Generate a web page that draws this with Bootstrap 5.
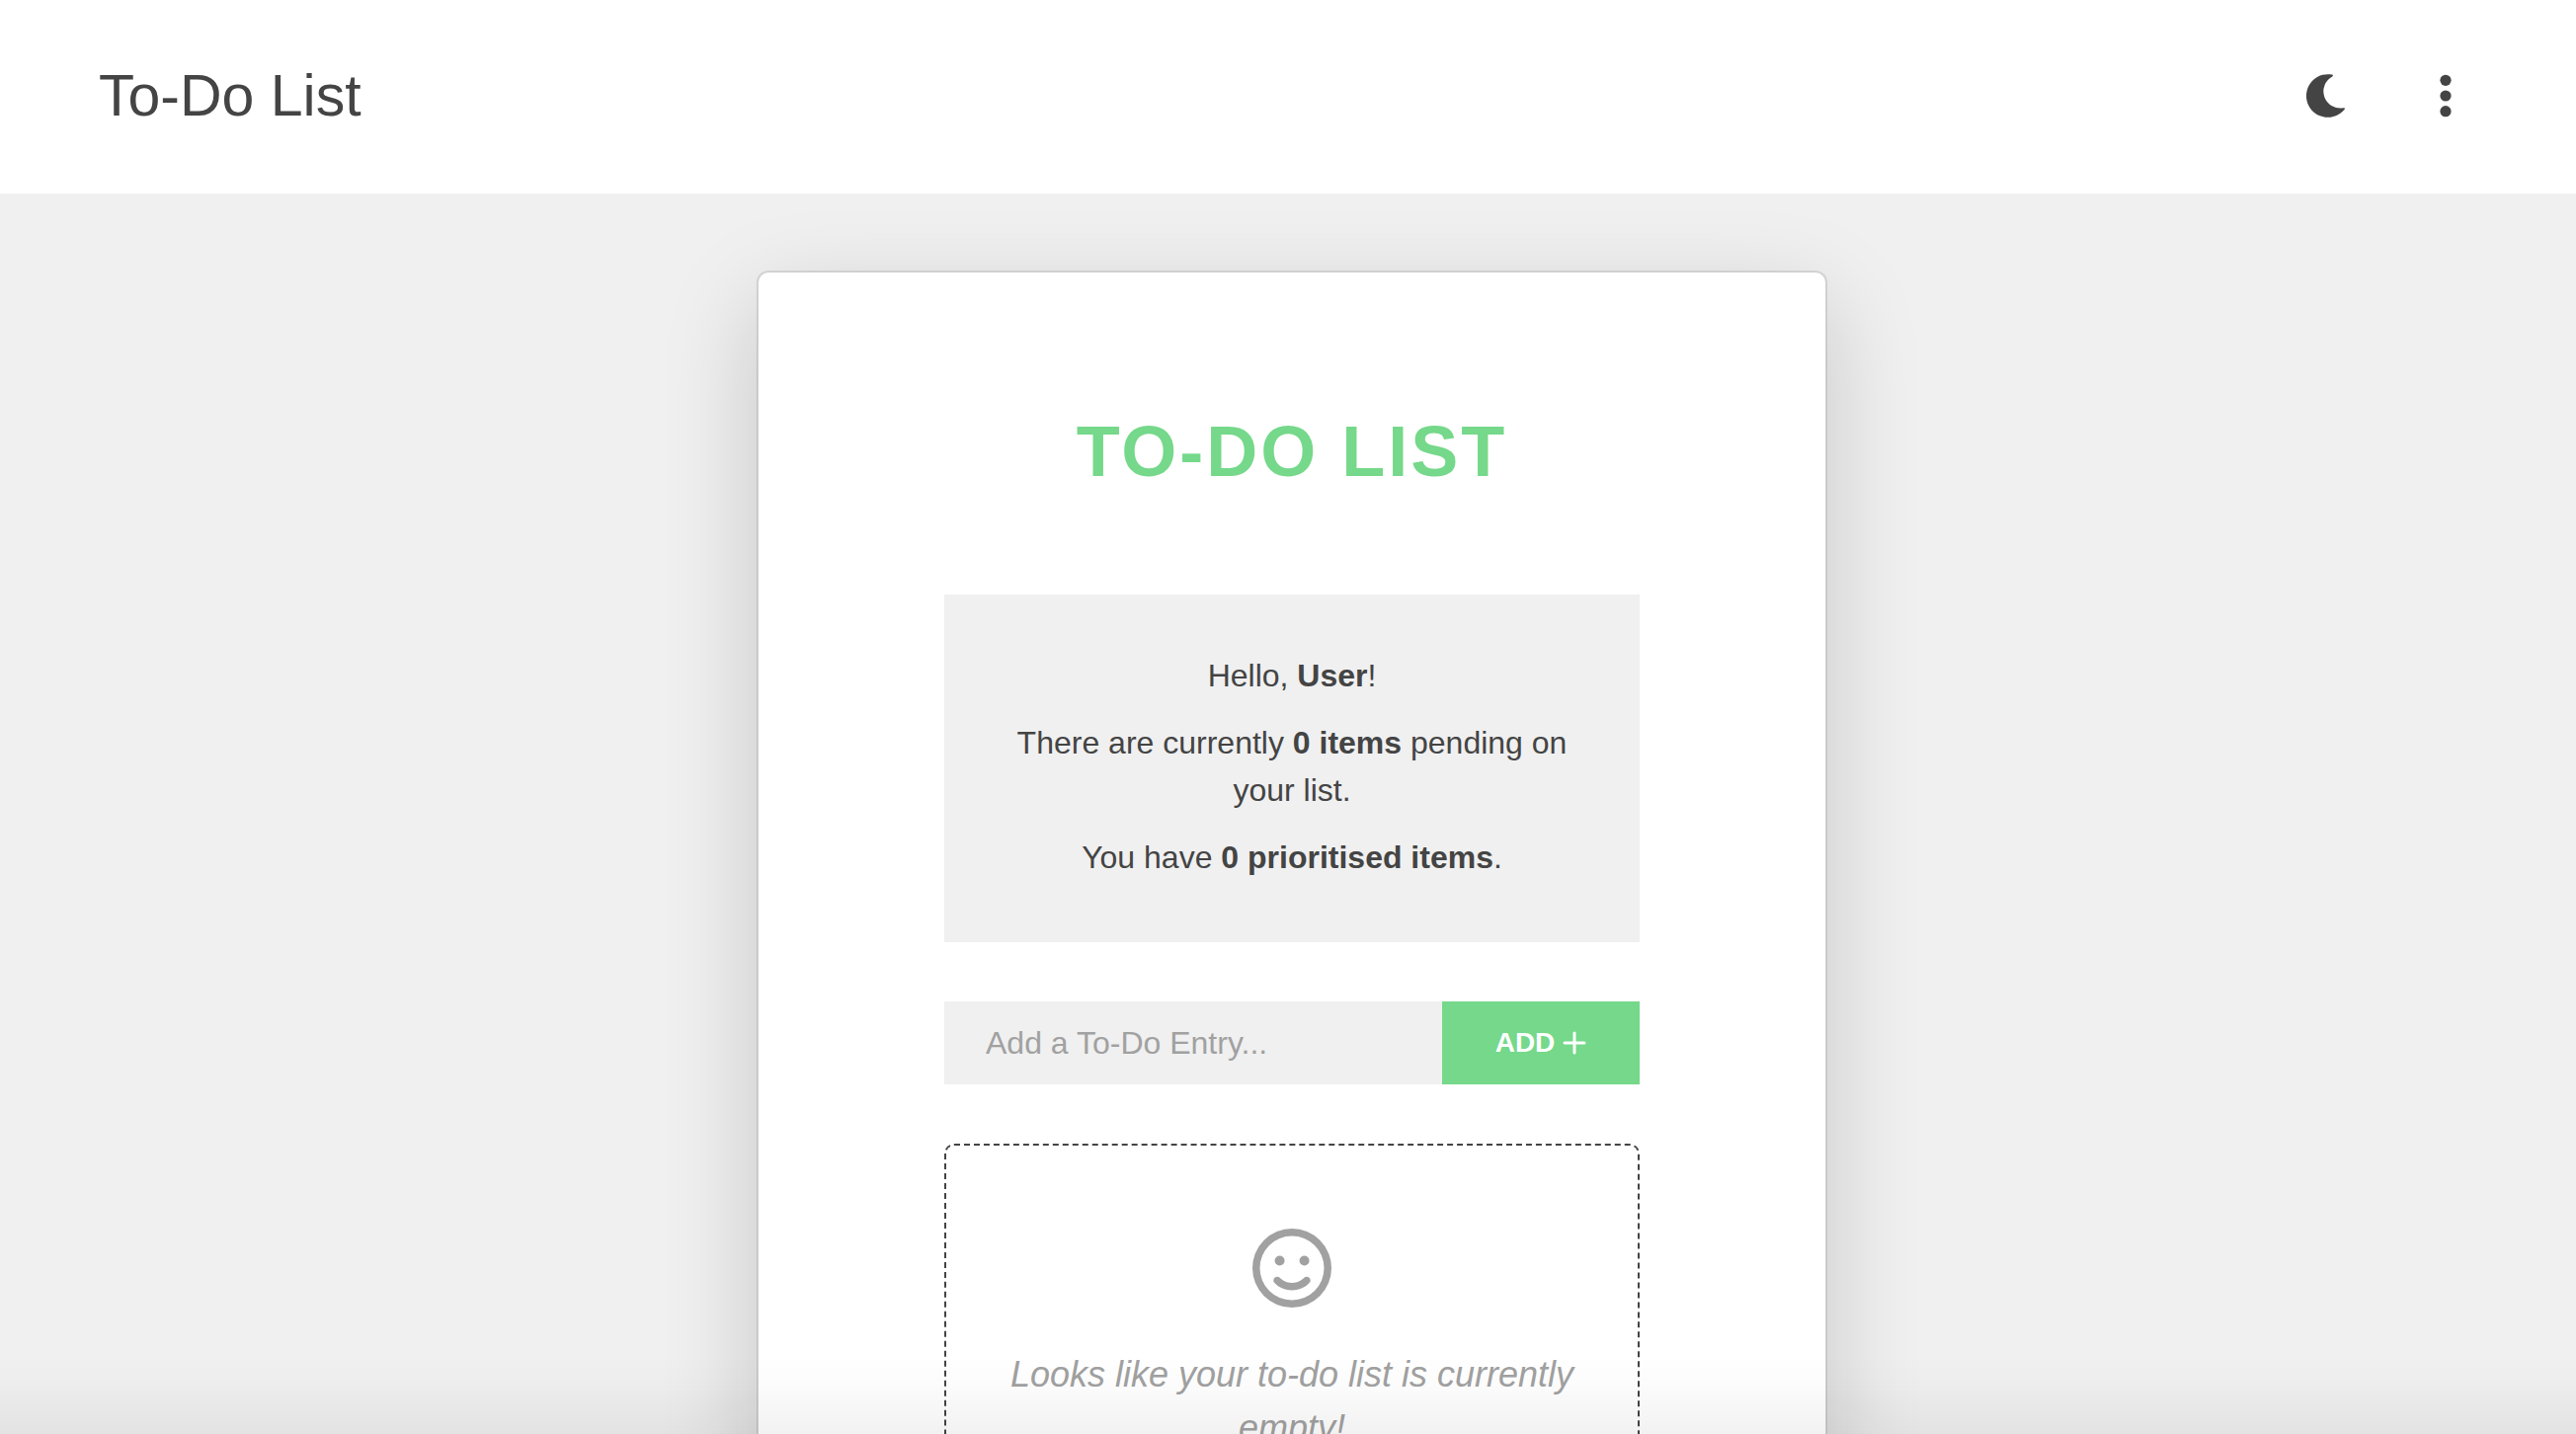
<!DOCTYPE html>
<html lang="en">
<head>
<meta charset="utf-8">
<meta name="viewport" content="width=device-width, initial-scale=1">
<title>To-Do List</title>
<link href="https://cdn.jsdelivr.net/npm/bootstrap@5.3.0/dist/css/bootstrap.min.css" rel="stylesheet">
<style>
  :root { --ink: #444; --page: #f0f0f0; --accent: #75d88a; --muted: #a1a1a1; }
  body { background: var(--page); color: var(--ink); font-family: "Liberation Sans", Arial, sans-serif; font-size: 32px; line-height: 48px; overflow-x: hidden; }
  .topbar { min-height: 196px; padding: 0 100px 2px; }
  .topbar .navbar-brand { color: var(--ink); font-size: 59px; line-height: 72px; }
  .topbar-actions { gap: 58px; }
  .icon-btn { width: 64px; height: 64px; color: var(--ink); border: 0; }
  .page-body { padding: 78px 0 80px 8px; }
  .todo-card { width: 1084px; max-width: 100%; padding: 136px 188px; border: 2px solid rgba(0, 0, 0, .11); background-clip: padding-box; border-radius: 12px; box-shadow: 0 32px 96px rgba(0, 0, 0, .175); }
  .todo-title { color: var(--accent); font-size: 72px; line-height: 90px; letter-spacing: 3px; margin-bottom: 100px; }
  .summary { background: var(--page); padding: 58px 60px 62px; margin-bottom: 60px; }
  .summary p { margin-bottom: 20px; }
  .summary p:last-child { margin-bottom: 0; }
  .entry { height: 84px; margin-bottom: 60px; }
  .entry .form-control { background: var(--page); border: 0; border-radius: 0; padding: 0 42px; font-size: 32px; color: var(--ink); }
  .entry .form-control::placeholder { color: var(--muted); opacity: 1; }
  .entry .btn { width: 200px; background: var(--accent); color: #fff; border: 0; border-radius: 0; font-size: 28px; }
  .empty-box { border: 2px dashed var(--ink); border-radius: 10px; padding: 84px 40px; color: var(--muted); font-size: 36px; line-height: 54px; }
  .empty-box svg { margin-bottom: 41px; }
  .edge-fade { height: 80px; background: linear-gradient(rgba(0, 0, 0, 0), rgba(0, 0, 0, .012) 35%, rgba(0, 0, 0, .05)); pointer-events: none; }
</style>
</head>
<body>
<nav class="navbar topbar bg-white">
  <a class="navbar-brand p-0 m-0" href="#">To-Do List</a>
  <div class="topbar-actions d-flex align-items-center">
    <button type="button" class="btn icon-btn p-0 d-flex align-items-center justify-content-center" aria-label="Dark mode">
      <svg width="39" height="44" viewBox="0 0 117 131" fill="currentColor" aria-hidden="true"><path d="M66 0A65.500 65.500 0 1 0 116 107C118.500 104.500 116.500 101.500 113 102A51 51 0 0 1 79 7C82 4 81 1 77 .8C73 0 70 0 66 0Z"/></svg>
    </button>
    <button type="button" class="btn icon-btn p-0 d-flex align-items-center justify-content-center" aria-label="Menu">
      <svg width="12" height="44" viewBox="0 0 12 44" fill="currentColor" aria-hidden="true"><circle cx="6" cy="6.300" r="5.600"/><circle cx="6" cy="22" r="5.600"/><circle cx="6" cy="37.700" r="5.600"/></svg>
    </button>
  </div>
</nav>
<main class="page-body d-flex justify-content-center">
  <section class="card todo-card text-center">
    <h1 class="todo-title fw-bold text-uppercase">To-Do List</h1>
    <div class="summary">
      <p>Hello, <strong>User</strong>!</p>
      <p>There are currently <strong>0 items</strong> pending on your list.</p>
      <p>You have <strong>0 prioritised items</strong>.</p>
    </div>
    <form class="entry input-group flex-nowrap">
      <input type="text" class="form-control" placeholder="Add a To-Do Entry..." aria-label="Add a To-Do Entry">
      <button type="button" class="btn fw-bold d-flex align-items-center justify-content-center gap-2">ADD
        <svg width="24" height="24" viewBox="0 0 24 24" fill="none" stroke="currentColor" stroke-width="3" stroke-linecap="round" aria-hidden="true"><path d="M12 2v20M2 12h20"/></svg>
      </button>
    </form>
    <div class="empty-box">
      <svg class="d-block mx-auto" width="80" height="80" viewBox="0 0 512 512" fill="currentColor" aria-hidden="true"><path d="M464 256A208 208 0 1 0 48 256a208 208 0 1 0 416 0zM0 256a256 256 0 1 1 512 0A256 256 0 1 1 0 256zm177.600 62.700C192.600 334.500 218.800 352 256 352s63.400-17.500 78.400-33.300c9.200-9.600 24.400-9.900 33.900-.7s9.900 24.400 .7 33.900c-22 23-60 48.100-113 48.100s-91-25.100-113-48.100c-9.200-9.600-8.900-24.800 .7-33.900s24.800-8.900 33.900 .7zM144.400 208a32 32 0 1 1 64 0 32 32 0 1 1 -64 0zm192-32a32 32 0 1 1 0 64 32 32 0 1 1 0-64z"/></svg>
      <p class="fst-italic mb-0">Looks like your to-do list is currently empty!</p>
    </div>
  </section>
</main>
<div class="edge-fade fixed-bottom"></div>
<script src="https://cdn.jsdelivr.net/npm/bootstrap@5.3.0/dist/js/bootstrap.bundle.min.js"></script>
</body>
</html>
